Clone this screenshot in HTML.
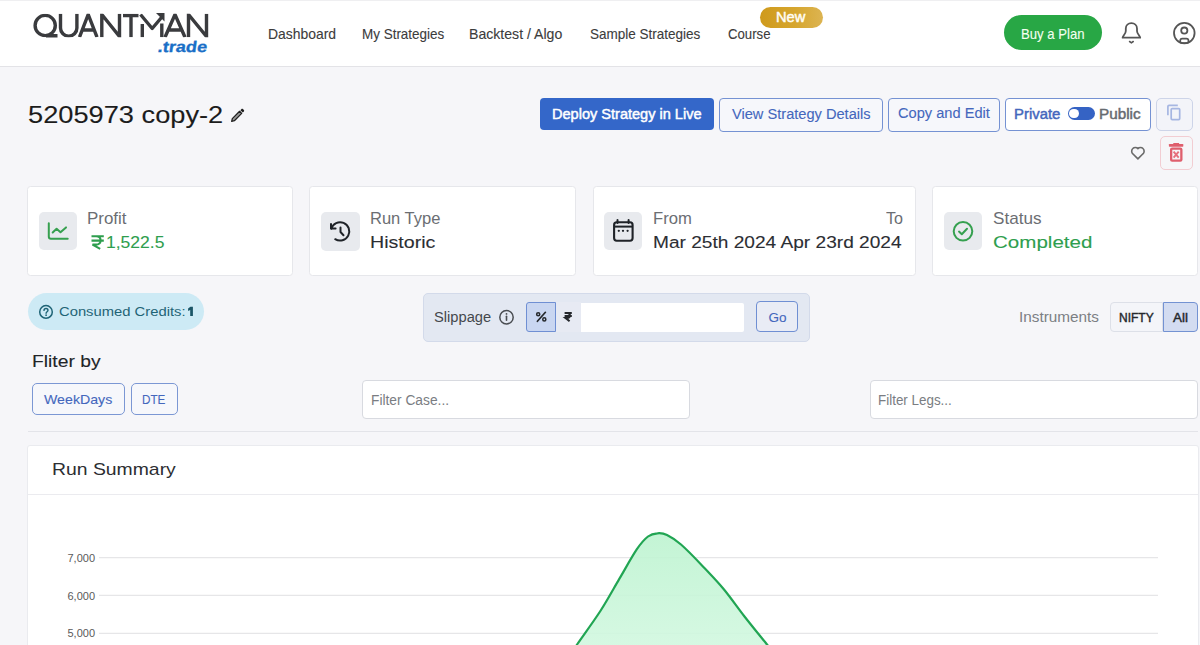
<!DOCTYPE html>
<html><head><meta charset="utf-8"><title>Quantman</title>
<style>
*{margin:0;padding:0;box-sizing:border-box}
html,body{width:1200px;height:645px;overflow:hidden;background:#f6f6f9;font-family:"Liberation Sans",sans-serif}
.a{position:absolute}
.tx{position:absolute;white-space:nowrap;line-height:1;transform-origin:0 0;font-family:"Liberation Sans",sans-serif}
svg{position:absolute;overflow:visible}
</style></head><body>
<!-- header -->
<div class="a" style="left:0;top:0;width:1200px;height:66px;background:#fff;border-top:1px solid #efeff1"></div>
<div class="a" style="left:0;top:66px;width:1200px;height:1px;background:#e3e3e7"></div>

<!-- logo -->
<svg style="left:0;top:0" width="230" height="60" viewBox="0 0 230 60">
 <defs><clipPath id="lc"><rect x="0" y="13.8" width="230" height="23.5"/></clipPath></defs>
 <g clip-path="url(#lc)" fill="none" stroke="#3a3b3e" stroke-width="3.4" stroke-linecap="butt" stroke-linejoin="miter">
  <circle cx="45.2" cy="25.5" r="10.1"/>
  <path d="M60.5 13.8 V28 a8.2 8.2 0 0 0 16.4 0 V13.8"/>
  <path d="M79.5 37.2 L88.2 14.5 L97 37.2 M82.5 30 H94"/>
  <path d="M101.8 37.2 V14.5 L119.5 36.5 V13.8"/>
  <path d="M123 15.5 H138.5 M131 15.5 V37.2"/>
  <path d="M142.3 37.2 V24 M161.8 23.5 V37.2"/><path d="M140.5 14.5 L152.2 28.5 L161.5 17.5" stroke-linejoin="round"/>
  <path d="M165 37.2 L175 14.5 L185 37.2 M168.5 30 H181.5"/>
  <path d="M188.5 37.2 V14.5 L206.5 36.5 V13.8"/>
 </g>
 <path d="M46 34 L57.5 34 L57.5 37.5 L46 37.5 Z" fill="#3a3b3e"/>
 <path d="M164.5 13 L156 13 L164.5 21.5 Z" fill="#3a3b3e"/>
 <g transform="translate(157.2,51.8) skewX(-8)"><text x="0" y="0" font-family="Liberation Sans" font-weight="700" font-size="15.5" fill="#1a6fc7" stroke="#1a6fc7" stroke-width="0.3" textLength="49.3" lengthAdjust="spacingAndGlyphs">.trade</text></g>
</svg>

<!-- New badge -->
<div class="a" style="left:760px;top:6.5px;width:63px;height:21px;border-radius:11px;background:linear-gradient(90deg,#cf9a1c,#d6a62e 55%,#dcb452)"></div>
<!-- Buy a plan -->
<div class="a" style="left:1004px;top:15px;width:98px;height:35px;border-radius:18px;background:#28a745"></div>
<!-- bell -->
<svg style="left:1115px;top:15px" width="40" height="35" viewBox="0 0 40 35">
 <path d="M7.6 22.7 C7.6 21 10.8 19 10.8 16 V13.5 C10.8 10.3 13.3 8.1 16.4 8.1 C19.5 8.1 22 10.3 22 13.5 V16 C22 19 25.2 21 25.2 22.7 Z" fill="none" stroke="#555" stroke-width="1.8" stroke-linejoin="round"/>
 <path d="M14.6 26.5 L16.4 27.8 L18.2 26.5" fill="none" stroke="#555" stroke-width="1.6" stroke-linecap="round"/>
</svg>
<!-- profile -->
<svg style="left:1170px;top:19px" width="30" height="30" viewBox="0 0 30 30">
 <circle cx="14.3" cy="14.1" r="10.3" fill="none" stroke="#555" stroke-width="1.8"/>
 <circle cx="14.3" cy="11.6" r="3.1" fill="none" stroke="#555" stroke-width="1.8"/>
 <rect x="10.2" y="19.6" width="8.3" height="4.4" rx="2.1" fill="none" stroke="#555" stroke-width="1.7"/>
</svg>

<!-- pencil -->
<svg style="left:225px;top:102px" width="25" height="25" viewBox="0 0 25 25">
 <path d="M6.7 19.3 L7.3 16.6 L14.6 9.3 L16.7 11.4 L9.4 18.7 Z" fill="#9a9a9a" stroke="#1e1e1e" stroke-width="1.25" stroke-linejoin="round"/>
 <path d="M15.4 8.2 L16.5 7.1 C16.9 6.7 17.5 6.7 17.9 7.1 L18.9 8.1 C19.3 8.5 19.3 9.1 18.9 9.5 L17.8 10.6 Z" fill="#1e1e1e"/>
</svg>

<!-- buttons -->
<div class="a" style="left:540px;top:98px;width:174px;height:32px;border-radius:4px;background:#3467c9"></div>
<div class="a" style="left:719px;top:98px;width:164px;height:33.5px;border-radius:4px;background:#f6f7fb;border:1px solid #7592d3"></div>
<div class="a" style="left:888px;top:98px;width:112px;height:33.5px;border-radius:4px;background:#f6f7fb;border:1px solid #7592d3"></div>
<div class="a" style="left:1005px;top:98px;width:146px;height:33px;border-radius:4px;background:#fff;border:1px solid #7592d3"></div>
<!-- toggle -->
<div class="a" style="left:1067.5px;top:107.3px;width:27.5px;height:13px;border-radius:7px;background:#3563c4"></div>
<div class="a" style="left:1069.3px;top:109.1px;width:9.4px;height:9.4px;border-radius:50%;background:#fff"></div>
<!-- copy icon button -->
<div class="a" style="left:1156px;top:98px;width:37px;height:33px;border-radius:5px;background:#f3f4f9;border:1px solid #cdd4e8"></div>
<svg style="left:1160px;top:100px" width="30" height="28" viewBox="0 0 30 28">
 <path d="M7.9 15.2 V6.5 C7.9 5.8 8.4 5.3 9.1 5.3 H17.8" fill="none" stroke="#a6b6e2" stroke-width="1.7"/>
 <rect x="11.2" y="8.6" width="8.5" height="11" rx="1" fill="none" stroke="#a6b6e2" stroke-width="1.7"/>
</svg>
<!-- heart -->
<svg style="left:1125px;top:141px" width="26" height="24" viewBox="0 0 26 24">
 <path d="M12.9 17.9 L7.8 12.8 C6.3 11.4 6.3 8.9 7.8 7.5 C9.2 6.1 11.5 6.1 12.9 7.6 C14.3 6.1 16.6 6.1 18 7.5 C19.5 8.9 19.5 11.4 18 12.8 Z" fill="none" stroke="#6a6a6a" stroke-width="1.6" stroke-linejoin="round"/>
</svg>
<!-- trash button -->
<div class="a" style="left:1160px;top:136.3px;width:33px;height:33.3px;border-radius:5px;background:#f6f6f8;border:1px solid #f2cdd2"></div>
<svg style="left:1160px;top:136px" width="34" height="34" viewBox="0 0 34 34">
 <rect x="8.9" y="8" width="14.4" height="2.7" rx="0.6" fill="#df5f6d"/>
 <rect x="13.3" y="7" width="5.8" height="1.6" fill="#df5f6d"/>
 <rect x="11.15" y="12.55" width="10.2" height="12.1" rx="1" fill="none" stroke="#df5f6d" stroke-width="2.3"/>
 <path d="M13.6 15.6 L18.7 21.7 M18.7 15.6 L13.6 21.7" stroke="#e6707d" stroke-width="1.9"/>
</svg>

<!-- stat cards -->
<div class="a" style="left:27px;top:186px;width:266px;height:90px;border-radius:3.5px;background:#fff;border:1px solid #e6e7eb"></div>
<div class="a" style="left:309px;top:186px;width:266.5px;height:90px;border-radius:3.5px;background:#fff;border:1px solid #e6e7eb"></div>
<div class="a" style="left:592.5px;top:186px;width:323px;height:90px;border-radius:3.5px;background:#fff;border:1px solid #e6e7eb"></div>
<div class="a" style="left:932px;top:186px;width:266px;height:90px;border-radius:3.5px;background:#fff;border:1px solid #e6e7eb"></div>
<div class="a" style="left:39px;top:212px;width:38px;height:38px;border-radius:5px;background:#e8eaee"></div>
<div class="a" style="left:321px;top:212px;width:38.5px;height:38.5px;border-radius:5px;background:#e8eaee"></div>
<div class="a" style="left:604px;top:212px;width:38px;height:38px;border-radius:5px;background:#e8eaee"></div>
<div class="a" style="left:943.5px;top:212px;width:38.5px;height:38px;border-radius:5px;background:#e8eaee"></div>
<!-- chart icon -->
<svg style="left:38px;top:210px" width="40" height="42" viewBox="0 0 40 42">
 <path d="M10.8 13.2 V26.5 C10.8 27.9 11.6 28.8 13 28.8 H29.7" fill="none" stroke="#36a04f" stroke-width="2" stroke-linecap="round"/>
 <path d="M14.7 22.5 L18.6 18.7 L22.5 22.2 L28 17.4" fill="none" stroke="#36a04f" stroke-width="2" stroke-linecap="round" stroke-linejoin="round"/>
</svg>
<!-- history icon -->
<svg style="left:320px;top:210px" width="42" height="42" viewBox="0 0 42 42">
 <path d="M11.3 18.6 A9.2 9.2 0 1 1 15.2 29.2" fill="none" stroke="#1f2328" stroke-width="2" stroke-linecap="round"/>
 <path d="M11 14 V18.6 H15.6" fill="none" stroke="#1f2328" stroke-width="2" stroke-linecap="round" stroke-linejoin="round"/>
 <path d="M20.5 17.6 V22 L23.5 25.2" fill="none" stroke="#1f2328" stroke-width="2" stroke-linecap="round" stroke-linejoin="round"/>
</svg>
<!-- calendar icon -->
<svg style="left:602px;top:210px" width="42" height="42" viewBox="0 0 42 42">
 <rect x="12.1" y="12.3" width="18.5" height="18.4" rx="2.6" fill="none" stroke="#1f2328" stroke-width="2.1"/>
 <path d="M12.1 16.6 H30.6" stroke="#1f2328" stroke-width="2"/>
 <path d="M15.5 10 V13 M26.6 10 V13" stroke="#1f2328" stroke-width="2" stroke-linecap="round"/>
 <circle cx="16.8" cy="20.8" r="1.15" fill="#1f2328"/><circle cx="21" cy="20.8" r="1.15" fill="#1f2328"/><circle cx="25.6" cy="20.8" r="1.15" fill="#1f2328"/>
</svg>
<!-- check circle -->
<svg style="left:943px;top:210px" width="40" height="42" viewBox="0 0 40 42">
 <circle cx="20" cy="21.3" r="9.3" fill="none" stroke="#35a04f" stroke-width="2"/>
 <path d="M16 21.6 L18.8 24.2 L24 18.8" fill="none" stroke="#35a04f" stroke-width="2" stroke-linecap="round" stroke-linejoin="round"/>
</svg>
<!-- rupee sign profit -->
<svg style="left:88px;top:230px" width="20" height="22" viewBox="0 0 20 22">
 <path d="M3.5 6.2 H15.8 M3.5 10.6 H15.8 M4.2 6.2 H8.2 C11 6.2 12.6 8 12.6 10.4 C12.6 12.9 10.8 14.6 8 14.6 H4.5 L12.2 18.8" fill="none" stroke="#2e9e4e" stroke-width="2.1" stroke-linejoin="miter"/>
</svg>

<!-- consumed credits -->
<div class="a" style="left:27.5px;top:293px;width:176.5px;height:37px;border-radius:19px;background:#cdeaf5"></div>
<svg style="left:36px;top:303px" width="20" height="18" viewBox="0 0 20 18">
 <circle cx="10" cy="8.9" r="6.3" fill="none" stroke="#1f6476" stroke-width="1.5"/>
 <path d="M8 7.4 C8 6.2 8.9 5.5 10 5.5 C11.2 5.5 12 6.2 12 7.3 C12 8.6 10.1 8.8 10.1 10.3" fill="none" stroke="#1f6476" stroke-width="1.4" stroke-linecap="round"/>
 <circle cx="10.1" cy="12.2" r="0.85" fill="#1f6476"/>
</svg>

<svg style="left:0;top:0" width="200" height="330" viewBox="0 0 200 330"><path d="M188.1 308.4 L190.4 306.8 L192.9 306.8 V315.9 H190.2 V309.9 L188.1 310.9 Z" fill="#1a5566"/></svg>
<!-- slippage box -->
<div class="a" style="left:423px;top:293.2px;width:386.5px;height:48.8px;border-radius:5px;background:#e3e8f2;border:1px solid #d3daea"></div>
<svg style="left:496px;top:306px" width="22" height="22" viewBox="0 0 22 22">
 <circle cx="10.5" cy="11.2" r="6.7" fill="none" stroke="#4a4d52" stroke-width="1.5"/>
 <path d="M10.5 10.2 V14.3" stroke="#4a4d52" stroke-width="1.6" stroke-linecap="round"/>
 <circle cx="10.5" cy="7.9" r="0.9" fill="#4a4d52"/>
</svg>
<div class="a" style="left:526px;top:301.8px;width:30px;height:30.5px;border-radius:3px 0 0 3px;background:#c9d6f1;border:1px solid #6f8fd3"></div>
<div class="a" style="left:556px;top:302px;width:25px;height:30px;background:#e7eaf3"></div>
<svg style="left:530px;top:308px" width="20" height="18" viewBox="0 0 20 18"><circle cx="8.2" cy="6.2" r="1.55" fill="none" stroke="#25282c" stroke-width="1.5"/><circle cx="14.3" cy="11.4" r="1.55" fill="none" stroke="#25282c" stroke-width="1.5"/><path d="M15.4 4.3 L7.4 13.3" stroke="#25282c" stroke-width="1.7" stroke-linecap="round"/></svg>
<svg style="left:556px;top:302px" width="25" height="30" viewBox="0 0 25 30">
 <path d="M8.6 11 H15.8 M8.6 13.9 H15.8 M9.2 11 H11.4 C13 11 13.9 12.1 13.9 13.5 C13.9 14.9 12.9 15.9 11.3 15.9 H9.4 L13.6 19.3" fill="none" stroke="#25282c" stroke-width="2"/>
</svg>
<div class="a" style="left:581px;top:302.5px;width:163px;height:29px;background:#fff;border-radius:0 2px 2px 0"></div>
<div class="a" style="left:756.2px;top:301.2px;width:41.5px;height:31.3px;border-radius:4px;background:#e9ecf5;border:1px solid #6f8fd3"></div>

<!-- instruments -->
<div class="a" style="left:1110.4px;top:302.4px;width:53px;height:29.6px;border-radius:4px 0 0 4px;background:#f4f5f9;border:1px solid #dde0e8"></div>
<div class="a" style="left:1163px;top:302.4px;width:35.4px;height:29.6px;border-radius:0 4px 4px 0;background:#d3dcf1;border:1px solid #7392d2"></div>

<!-- filter -->
<div class="a" style="left:32px;top:383.4px;width:92.7px;height:32px;border-radius:5px;background:#f6f7fb;border:1px solid #7b97d4"></div>
<div class="a" style="left:131px;top:383.4px;width:46.7px;height:32px;border-radius:5px;background:#f6f7fb;border:1px solid #7b97d4"></div>
<div class="a" style="left:362.4px;top:379.5px;width:328px;height:39.8px;border-radius:4px;background:#fff;border:1px solid #d8dae0"></div>
<div class="a" style="left:869.5px;top:379.5px;width:328.5px;height:39.8px;border-radius:4px;background:#fff;border:1px solid #d8dae0"></div>
<div class="a" style="left:28px;top:431px;width:1170px;height:1px;background:#e3e4e9"></div>

<!-- run summary card -->
<div class="a" style="left:27px;top:445px;width:1171.5px;height:220px;border-radius:3px;background:#fff;border:1px solid #eaebef"></div>
<div class="a" style="left:28px;top:494px;width:1170px;height:1px;background:#ebebef"></div>

<!-- chart -->
<svg style="left:0;top:0" width="1200" height="645" viewBox="0 0 1200 645">
 <defs><linearGradient id="gf" x1="0" y1="0" x2="0" y2="1"><stop offset="0" stop-color="#bdf3d0"/><stop offset="1" stop-color="#d2f8e0"/></linearGradient></defs>
 <g stroke="#e6e6e8" stroke-width="1.2">
  <line x1="99" y1="557.6" x2="1158" y2="557.6"/>
  <line x1="99" y1="595.4" x2="1158" y2="595.4"/>
  <line x1="99" y1="633.3" x2="1158" y2="633.3"/>
 </g>
 <g font-family="Liberation Sans" font-size="11" fill="#5a5a5a" text-anchor="end">
  <text x="95" y="561.7">7,000</text>
  <text x="95" y="599.5">6,000</text>
  <text x="95" y="637.4">5,000</text>
 </g>
 <path d="M573.5 650.0 C574.1 649.0 572.9 650.6 577.4 644.0 C581.9 637.4 593.7 621.4 600.7 610.5 C607.7 599.6 613.3 589.1 619.3 578.9 C625.3 568.7 632.1 556.3 636.9 549.2 C641.7 542.1 644.6 539.1 648.0 536.5 C651.4 533.9 654.2 533.5 657.4 533.3 C660.6 533.0 663.1 533.1 667.0 535.0 C670.9 536.9 674.9 539.2 681.0 544.5 C687.1 549.8 696.3 559.4 703.4 566.9 C710.5 574.4 717.0 581.0 723.8 589.2 C730.6 597.4 737.2 607.1 744.3 616.2 C751.4 625.3 762.1 638.4 766.6 644.0 C771.1 649.6 770.3 649.0 771.0 650.0 Z" fill="url(#gf)" fill-opacity="0.9"/>
 <path d="M573.5 650.0 C574.1 649.0 572.9 650.6 577.4 644.0 C581.9 637.4 593.7 621.4 600.7 610.5 C607.7 599.6 613.3 589.1 619.3 578.9 C625.3 568.7 632.1 556.3 636.9 549.2 C641.7 542.1 644.6 539.1 648.0 536.5 C651.4 533.9 654.2 533.5 657.4 533.3 C660.6 533.0 663.1 533.1 667.0 535.0 C670.9 536.9 674.9 539.2 681.0 544.5 C687.1 549.8 696.3 559.4 703.4 566.9 C710.5 574.4 717.0 581.0 723.8 589.2 C730.6 597.4 737.2 607.1 744.3 616.2 C751.4 625.3 762.1 638.4 766.6 644.0 C771.1 649.6 770.3 649.0 771.0 650.0" fill="none" stroke="#21a553" stroke-width="2.2"/>
</svg>

<span class="tx" style="left:267.82px;top:26.78px;font-size:14.2px;font-weight:400;color:#3c3c3c;transform:scaleX(0.9805);-webkit-text-stroke:0.1px currentColor;">Dashboard</span>
<span class="tx" style="left:361.85px;top:26.78px;font-size:14.2px;font-weight:400;color:#3c3c3c;transform:scaleX(0.9482);-webkit-text-stroke:0.1px currentColor;">My Strategies</span>
<span class="tx" style="left:469.31px;top:26.78px;font-size:14.2px;font-weight:400;color:#3c3c3c;transform:scaleX(0.9942);-webkit-text-stroke:0.1px currentColor;">Backtest / Algo</span>
<span class="tx" style="left:590.10px;top:26.78px;font-size:14.2px;font-weight:400;color:#3c3c3c;transform:scaleX(0.9514);-webkit-text-stroke:0.1px currentColor;">Sample Strategies</span>
<span class="tx" style="left:727.60px;top:26.78px;font-size:14.2px;font-weight:400;color:#3c3c3c;transform:scaleX(0.9292);-webkit-text-stroke:0.1px currentColor;">Course</span>
<span class="tx" style="left:776.24px;top:10.92px;font-size:13.8px;font-weight:400;color:#fffdf5;transform:scaleX(1.0624);-webkit-text-stroke:0.45px currentColor;">New</span>
<span class="tx" style="left:1021.07px;top:27.18px;font-size:14.2px;font-weight:400;color:#f4fff0;transform:scaleX(0.9262);-webkit-text-stroke:0.1px currentColor;">Buy a Plan</span>
<span class="tx" style="left:28.00px;top:103.60px;font-size:23.5px;font-weight:400;color:#1c1c1c;transform:scaleX(1.1583);-webkit-text-stroke:0.1px currentColor;">5205973 copy-2</span>
<span class="tx" style="left:551.96px;top:106.95px;font-size:14.0px;font-weight:400;color:#ffffff;transform:scaleX(1.0386);-webkit-text-stroke:0.45px currentColor;">Deploy Strategy in Live</span>
<span class="tx" style="left:731.70px;top:107.35px;font-size:14.0px;font-weight:400;color:#4467bd;transform:scaleX(1.0437);-webkit-text-stroke:0.1px currentColor;">View Strategy Details</span>
<span class="tx" style="left:898.00px;top:106.15px;font-size:14.0px;font-weight:400;color:#4467bd;transform:scaleX(1.0448);-webkit-text-stroke:0.1px currentColor;">Copy and Edit</span>
<span class="tx" style="left:1014.24px;top:106.95px;font-size:14.0px;font-weight:400;color:#4467bd;transform:scaleX(1.0634);-webkit-text-stroke:0.45px currentColor;">Private</span>
<span class="tx" style="left:1099.21px;top:106.95px;font-size:14.0px;font-weight:400;color:#666a70;transform:scaleX(1.0907);-webkit-text-stroke:0.45px currentColor;">Public</span>
<span class="tx" style="left:86.95px;top:209.58px;font-size:16.2px;font-weight:400;color:#6b6e73;transform:scaleX(1.0460);">Profit</span>
<span class="tx" style="left:370.28px;top:209.58px;font-size:16.2px;font-weight:400;color:#6b6e73;transform:scaleX(1.0207);">Run Type</span>
<span class="tx" style="left:653.17px;top:209.58px;font-size:16.2px;font-weight:400;color:#6b6e73;transform:scaleX(1.0281);">From</span>
<span class="tx" style="left:886.00px;top:209.58px;font-size:16.2px;font-weight:400;color:#6b6e73;transform:scaleX(0.9946);">To</span>
<span class="tx" style="left:993.30px;top:209.58px;font-size:16.2px;font-weight:400;color:#6b6e73;transform:scaleX(1.0568);">Status</span>
<span class="tx" style="left:105.98px;top:234.04px;font-size:17.2px;font-weight:400;color:#2e9e4e;transform:scaleX(1.0182);-webkit-text-stroke:0.1px currentColor;">1,522.5</span>
<span class="tx" style="left:369.86px;top:233.64px;font-size:17.2px;font-weight:400;color:#2c2e33;transform:scaleX(1.1411);-webkit-text-stroke:0.1px currentColor;">Historic</span>
<span class="tx" style="left:652.89px;top:234.04px;font-size:17.2px;font-weight:400;color:#2c2e33;transform:scaleX(1.1117);-webkit-text-stroke:0.1px currentColor;">Mar 25th 2024 Apr 23rd 2024</span>
<span class="tx" style="left:993.00px;top:233.84px;font-size:17.2px;font-weight:400;color:#2e9e4e;transform:scaleX(1.1955);-webkit-text-stroke:0.1px currentColor;">Completed</span>
<span class="tx" style="left:59.00px;top:305.02px;font-size:13.2px;font-weight:400;color:#1f6476;transform:scaleX(1.1211);">Consumed Credits:</span>
<span class="tx" style="left:434.30px;top:310.15px;font-size:14.0px;font-weight:400;color:#45484d;transform:scaleX(1.0493);">Slippage</span>
<span class="tx" style="left:768.50px;top:310.77px;font-size:13.5px;font-weight:400;color:#4467bd;transform:scaleX(1.0000);-webkit-text-stroke:0.1px currentColor;">Go</span>
<span class="tx" style="left:1018.52px;top:310.38px;font-size:14.2px;font-weight:400;color:#7c7f84;transform:scaleX(1.0791);">Instruments</span>
<span class="tx" style="left:1119.08px;top:311.19px;font-size:13.0px;font-weight:400;color:#25282c;transform:scaleX(0.9219);-webkit-text-stroke:0.45px currentColor;">NIFTY</span>
<span class="tx" style="left:1173.00px;top:311.19px;font-size:13.0px;font-weight:400;color:#25282c;transform:scaleX(1.0303);-webkit-text-stroke:0.45px currentColor;">All</span>
<span class="tx" style="left:31.57px;top:352.51px;font-size:17.0px;font-weight:400;color:#222428;transform:scaleX(1.1342);-webkit-text-stroke:0.1px currentColor;">Fliter by</span>
<span class="tx" style="left:44.30px;top:393.32px;font-size:13.2px;font-weight:400;color:#4467bd;transform:scaleX(1.0747);-webkit-text-stroke:0.1px currentColor;">WeekDays</span>
<span class="tx" style="left:142.11px;top:393.32px;font-size:13.2px;font-weight:400;color:#4467bd;transform:scaleX(0.8874);-webkit-text-stroke:0.1px currentColor;">DTE</span>
<span class="tx" style="left:370.50px;top:393.72px;font-size:13.8px;font-weight:400;color:#7a7d82;transform:scaleX(0.9978);">Filter Case...</span>
<span class="tx" style="left:878.03px;top:393.72px;font-size:13.8px;font-weight:400;color:#7a7d82;transform:scaleX(0.9720);">Filter Legs...</span>
<span class="tx" style="left:52.46px;top:460.91px;font-size:17.0px;font-weight:400;color:#2c2e32;transform:scaleX(1.1393);">Run Summary</span>
</body></html>
